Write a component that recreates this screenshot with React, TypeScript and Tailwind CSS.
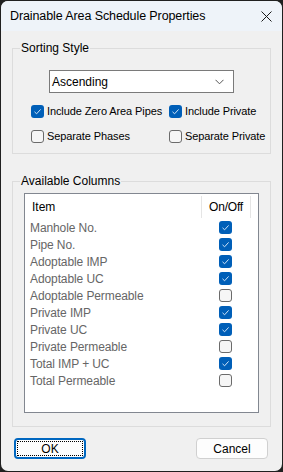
const columns = [
  { name: 'Manhole No.', on: true },
  { name: 'Pipe No.', on: true },
  { name: 'Adoptable IMP', on: true },
  { name: 'Adoptable UC', on: true },
  { name: 'Adoptable Permeable', on: false },
  { name: 'Private IMP', on: true },
  { name: 'Private UC', on: true },
  { name: 'Private Permeable', on: false },
  { name: 'Total IMP + UC', on: true },
  { name: 'Total Permeable', on: false },
]

function Check({ on }: { on: boolean }) {
  if (on) {
    return (
      <span className="flex h-[13px] w-[13px] shrink-0 items-center justify-center rounded-[3px] bg-[#005fb8]">
        <svg width="9" height="9" viewBox="0 0 9 9" fill="none">
          <path d="M1.5 4.8 L3.6 6.8 L7.6 2.4" stroke="#cfe3f7" strokeWidth="1" />
        </svg>
      </span>
    )
  }
  return <span className="h-[13px] w-[13px] shrink-0 rounded-[3px] border border-[#6b6b6b] bg-[#f6f6f6]" />
}

function CheckOption({ label, on }: { label: string; on: boolean }) {
  return (
    <div className="flex h-[13px] items-center gap-[3px] whitespace-nowrap">
      <Check on={on} />
      <span>{label}</span>
    </div>
  )
}

export default function App() {
  return (
    <div
      className="h-[472px] w-[283px] bg-[#202020] p-[1px] text-[12px] text-black"
      style={{ fontFamily: '"Liberation Sans", Arial, sans-serif' }}
    >
      <div className="flex h-full flex-col overflow-hidden rounded-[7px] bg-[#f0f0f0]">
        <div className="flex h-[30px] shrink-0 items-center justify-between bg-[#eef3f9] pl-[9px] pr-[10px]">
          <span className="text-[12.5px] tracking-[-0.1px]">Drainable Area Schedule Properties</span>
          <svg width="11" height="11" viewBox="0 0 11 11">
            <path d="M0.5 0.5 L10.5 10.5 M10.5 0.5 L0.5 10.5" stroke="#1a1a1a" strokeWidth="1" />
          </svg>
        </div>

        <div className="flex flex-1 flex-col px-[11px] pt-[10px]">
          <fieldset className="h-[113px] border border-[#dcdcdc] p-0">
            <legend className="ml-[7px] px-[1px] leading-[14px]">Sorting Style</legend>
            <div className="ml-[36px] mt-[15px] flex h-[23px] w-[185px] items-center justify-between border border-[#7a7a7a] bg-white pl-[2px] pr-[9px]">
              <span>Ascending</span>
              <svg width="9" height="6" viewBox="0 0 9 6">
                <path d="M0.5 0.8 L4.5 4.8 L8.5 0.8" stroke="#555" strokeWidth="1" fill="none" />
              </svg>
            </div>
            <div className="ml-[18px] mt-[12px] grid grid-cols-[138px_1fr] gap-y-[12px] text-[11px] tracking-[-0.1px]">
              <CheckOption label="Include Zero Area Pipes" on />
              <CheckOption label="Include Private" on />
              <CheckOption label="Separate Phases" on={false} />
              <CheckOption label="Separate Private" on={false} />
            </div>
          </fieldset>

          <fieldset className="mt-[20px] h-[253px] border border-[#dcdcdc] p-0">
            <legend className="ml-[7px] px-[1px] leading-[14px]">Available Columns</legend>
            <div className="mx-[11px] mt-[5px] h-[220px] border border-[#828790] bg-white">
              <div className="flex h-[25px] items-center">
                <span className="flex-1 pl-[7px]">Item</span>
                <span className="h-[22px] w-px bg-[#e5e5e5]" />
                <span className="w-[48px] text-center tracking-[-0.2px]">On/Off</span>
                <span className="h-[22px] w-px bg-[#e5e5e5]" />
                <span className="w-[7px]" />
              </div>
              {columns.map((c) => (
                <div key={c.name} className="flex h-[17px] items-center">
                  <span className="flex-1 pl-[5px] text-[#666666] tracking-[-0.1px]">{c.name}</span>
                  <span className="flex w-[49px] justify-center">
                    <Check on={c.on} />
                  </span>
                  <span className="w-[8px]" />
                </div>
              ))}
            </div>
          </fieldset>

          <div className="mt-[11px] flex justify-between px-[2px]">
            <button className="h-[21px] w-[72px] rounded-[4px] border-[2px] border-[#0067c0] bg-[#fdfdfd] p-[1px]">
              <span className="flex h-full w-full items-center justify-center border border-dotted border-black">
                OK
              </span>
            </button>
            <button className="mr-[1px] h-[21px] w-[72px] rounded-[4px] border border-[#d0d0d0] bg-[#fdfdfd]">
              Cancel
            </button>
          </div>
        </div>
      </div>
    </div>
  )
}
